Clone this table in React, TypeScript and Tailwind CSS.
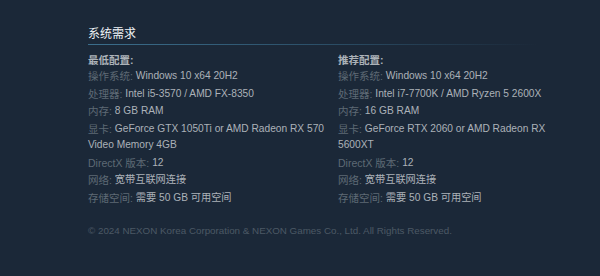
const font = { fontFamily: '"Liberation Sans", "Noto Sans CJK SC", sans-serif' };

type Row = { label: string; value: string };

const minimum: Row[] = [
  { label: "操作系统:", value: "Windows 10 x64 20H2" },
  { label: "处理器:", value: "Intel i5-3570 / AMD FX-8350" },
  { label: "内存:", value: "8 GB RAM" },
  { label: "显卡:", value: "GeForce GTX 1050Ti or AMD Radeon RX 570 Video Memory 4GB" },
  { label: "DirectX 版本:", value: "12" },
  { label: "网络:", value: "宽带互联网连接" },
  { label: "存储空间:", value: "需要 50 GB 可用空间" },
];

const recommended: Row[] = [
  { label: "操作系统:", value: "Windows 10 x64 20H2" },
  { label: "处理器:", value: "Intel i7-7700K / AMD Ryzen 5 2600X" },
  { label: "内存:", value: "16 GB RAM" },
  { label: "显卡:", value: "GeForce RTX 2060 or AMD Radeon RX 5600XT" },
  { label: "DirectX 版本:", value: "12" },
  { label: "网络:", value: "宽带互联网连接" },
  { label: "存储空间:", value: "需要 50 GB 可用空间" },
];

function ReqColumn({ title, rows }: { title: string; rows: Row[] }) {
  return (
    <div className="w-[240px]">
      <div className="text-[10.5px] leading-[15px] font-bold text-[#acb2b8]">{title}</div>
      <ul>
        {rows.map((row, i) => (
          <li key={i} className="text-[10.5px] leading-4 text-[#acb2b8] mb-[1.7px]">
            <span className="align-top text-[#5e6a75]">{row.label}</span>{" "}
            <span className="align-top text-[10.2px]">{row.value}</span>
          </li>
        ))}
      </ul>
    </div>
  );
}

export default function App() {
  return (
    <div className="w-[600px] h-[276px] bg-[#1b2838] pl-[88px] pt-[27px]" style={font}>
      {/* Header */}
      <div className="w-[450px]">
        <h2 className="text-[12px] leading-[14px] text-[#eef2f5] pb-[3px]">系统需求</h2>
        <div className="h-px bg-gradient-to-r from-[#3b6e8c] via-[#2c5069] to-transparent" />
      </div>

      {/* Columns */}
      <div className="flex gap-[10px] mt-[8px]">
        <ReqColumn title="最低配置:" rows={minimum} />
        <ReqColumn title="推荐配置:" rows={recommended} />
      </div>

      {/* Copyright */}
      <p className="mt-[15px] text-[9.8px] leading-4 text-[#4c5965]">
        © 2024 NEXON Korea Corporation &amp; NEXON Games Co., Ltd. All Rights Reserved.
      </p>
    </div>
  );
}
